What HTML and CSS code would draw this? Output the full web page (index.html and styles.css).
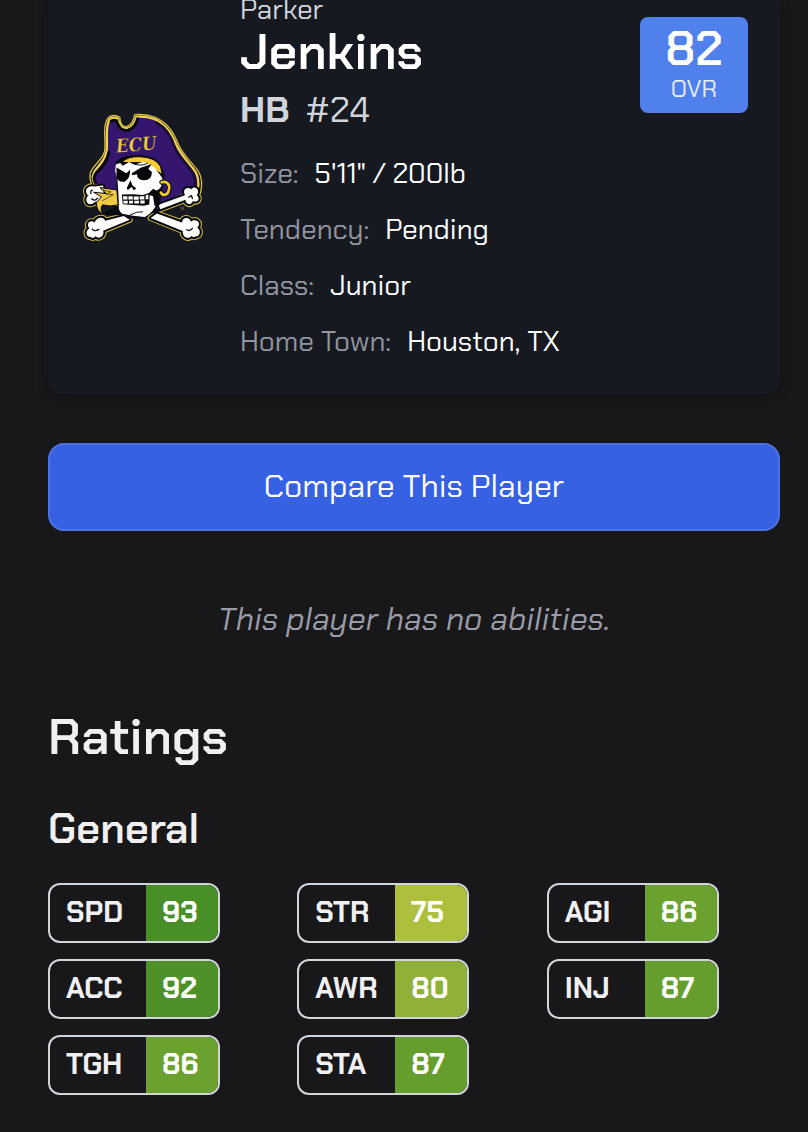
FILE: index.html
```html
<!DOCTYPE html>
<html lang="en">
<head>
<meta charset="utf-8">
<meta name="viewport" content="width=device-width, initial-scale=1">
<title>Parker Jenkins</title>
<link rel="stylesheet" href="styles.css">
</head>
<body>
<main class="page">
  <section class="card">
    <svg class="logo" viewBox="30 22 362 394" role="img" aria-label="ECU Pirates">
      <defs>
        <path id="bones" d="M150 337L94 351C90 338 68 338 62 356C48 346 35 360 46 374C32 382 37 401 50 400C60 407 64 398 64 398C76 408 92 398 88 381L168 348ZM250 329L325 356C328 338 350 340 352 354C368 342 386 357 372 372C386 382 378 400 366 398C360 405 355 396 355 396C344 410 326 400 328 382L231 343ZM255 303L335 274C325 256 342 246 353 256C366 242 382 260 370 274C382 284 375 297 358 292C353 306 336 302 336 288L260 316ZM88 245L62 248C46 243 31 254 38 268Q39 274 44 274C31 284 38 302 49 301Q59 301 64 294L90 290Z"/>
      </defs>
      <g stroke-linejoin="round" stroke-linecap="round">
        <use href="#bones" fill="#d6bd48" stroke="#d6bd48" stroke-width="18"/>
        <path d="M104 39Q119 28 138 39Q139 68 157 67Q177 63 183 31Q217 28 245 39C286 58 302 88 314 119C326 152 356 174 375 202Q390 226 382 266L371 276L258 313L120 303L70 263Q43 237 49 207C56 184 83 171 92 143C98 112 83 65 104 39Z" fill="#080a0f" stroke="#d6bd48" stroke-width="4"/>
        <path d="M108 44Q121 37 132 43Q139 75 160 72Q181 67 188 37Q219 35 242 44C280 62 297 91 308 121C321 154 350 178 367 204Q378 226 374 252L253 306L130 285L71 249Q50 228 59 208C66 190 88 178 97 147C104 115 91 67 108 44Z" fill="#35166f" stroke="#efd34f" stroke-width="7"/>
        <path d="M112 51Q120 46 128 49Q139 84 163 78Q185 71 192 43M66 238Q54 221 69 204C88 188 101 169 105 145" fill="none" stroke="#080a0f" stroke-width="9"/>
        <path d="M248 54C279 71 294 97 303 128C316 161 344 182 360 211Q368 231 366 245" fill="none" stroke="#180e36" stroke-width="8"/>
        <path d="M80 331L130 308L180 320L240 316L330 296L250 326L180 340L140 335Z" fill="#080a0f"/>
        <use href="#bones" fill="#080a0f" stroke="#080a0f" stroke-width="12"/>
        <use href="#bones" fill="#fff"/>
        <path d="M55 376Q62 385 75 377M340 378Q349 384 357 374M346 280L354 275L357 284M53 285Q64 293 71 283M55 259Q48 260 51 269" fill="none" stroke="#15151d" stroke-width="4"/>
        <path d="M130 176Q151 158 190 158Q245 158 257 186L268 214L254 300Q235 331 192 342Q148 337 137 311Z" fill="#080a0f" stroke="#080a0f" stroke-width="10"/>
        <path d="M145 174Q161 156 200 158Q246 160 261 187L266 212L246 198Q231 179 203 176Z" fill="#f5cc38" stroke="#080a0f" stroke-width="3"/>
        <path d="M126 181L139 177L147 185L166 174L182 182L207 174Q233 178 248 197L266 222Q270 250 249 260L239 255L230 266L244 268L250 300Q238 327 213 340L178 336L145 330Q133 320 135 306L134 272L131 228L124 201Z" fill="#fff"/>
        <path d="M128 190L158 208L169 197Q171 221 153 233Q132 236 128 220ZM174 208L201 191L234 180L224 195L235 204Q234 231 209 229Q190 228 190 211L176 214ZM170 229L176 244L188 254L180 259L174 249L162 258L159 253Z" fill="#08080c"/>
        <path d="M144 272L175 271L208 273L226 267L237 256L257 266L255 302L243 307L238 276L228 274L227 302L210 306L147 301Z" fill="#08080c"/>
        <path d="M148 277h13v10h-13zM164 277h13v10h-13zM180 278h15v10h-15zM198 277h14v10h-14zM216 274l8-2v14h-8zM149 291h13v8h-13zM166 291h12v8h-12zM182 291h14v8h-14zM200 290h13v9h-13z" fill="#fff"/>
        <path d="M185 181Q208 187 222 177M170 333Q190 322 207 324" fill="none" stroke="#111119" stroke-width="3"/>
        <path d="M264 235C279 230 291 242 286 257C284 275 267 277 262 266" fill="none" stroke="#080a0f" stroke-width="14"/>
        <path d="M264 235C279 230 291 242 286 257C284 275 267 277 262 266" fill="none" stroke="#efc936" stroke-width="8"/>
        <path d="M60 265L97 269L78 251L129 258L133 303Q108 310 86 303Q76 316 88 332Q67 321 67 296L82 280Z" fill="#f1cc42" stroke="#080a0f" stroke-width="3"/>
        <path d="M86 258L112 264L96 271L119 272L86 290" fill="none" stroke="#65501d" stroke-width="3"/>
      </g>
      <text class="logo-text" x="128" y="146" transform="rotate(-5 128 146)">ECU</text>
      <text class="logo-mark" x="319" y="319">TM</text>
    </svg>
    <div class="details">
      <header class="player-heading">
        <div class="identity">
          <p class="first-name">Parker</p>
          <h1 class="last-name">Jenkins</h1>
          <p class="position"><strong>HB</strong><span>#24</span></p>
        </div>
        <div class="overall"><strong>82</strong><span>OVR</span></div>
      </header>
      <dl class="facts">
        <div class="fact"><dt>Size:</dt><dd>5'11" / 200lb</dd></div>
        <div class="fact"><dt>Tendency:</dt><dd>Pending</dd></div>
        <div class="fact"><dt>Class:</dt><dd>Junior</dd></div>
        <div class="fact"><dt>Home Town:</dt><dd>Houston, TX</dd></div>
      </dl>
    </div>
  </section>
  <button class="compare" type="button">Compare This Player</button>
  <p class="empty">This player has no abilities.</p>
  <h2 class="section-title">Ratings</h2>
  <h3 class="group-title">General</h3>
  <dl class="ratings">
    <div class="rating"><dt>SPD</dt><dd class="r93">93</dd></div>
    <div class="rating"><dt>STR</dt><dd class="r75">75</dd></div>
    <div class="rating"><dt>AGI</dt><dd class="r86">86</dd></div>
    <div class="rating"><dt>ACC</dt><dd class="r92">92</dd></div>
    <div class="rating"><dt>AWR</dt><dd class="r80">80</dd></div>
    <div class="rating"><dt>INJ</dt><dd class="r87">87</dd></div>
    <div class="rating"><dt>TGH</dt><dd class="r86">86</dd></div>
    <div class="rating"><dt>STA</dt><dd class="r87">87</dd></div>
  </dl>
</main>
</body>
</html>
```
FILE: styles.css
```css
* { box-sizing: border-box; }
body {
  margin: 0;
  background: #18181a;
  color: #f0f0f2;
  font-family: "Chakra Petch", Inter, Roboto, sans-serif;
}
h1, h2, h3, p, dl, dd { margin: 0; }
.page { padding: 0 28px 36px 48px; }
.card {
  display: flex;
  align-items: center;
  gap: 36px;
  padding: 0 32px 24px 36px;
  border-radius: 0 0 12px 12px;
  background: #161920;
  box-shadow: 0 4px 8px #131315;
}
.logo { flex: none; width: 120px; height: 132px; margin-bottom: 16px; overflow: visible; }
.logo-text { font: italic bold 56px "DejaVu Serif Condensed", "DejaVu Serif", serif; font-stretch: normal; fill: #efce46; stroke: #201138; stroke-width: 1px; }
.logo-mark { font: 8px "Liberation Sans", sans-serif; fill: #b29c45; }
.details { flex: 1; min-width: 0; }
.player-heading { display: flex; justify-content: space-between; align-items: flex-start; }
.first-name { font-size: 28px; line-height: 20px; color: #d1d5db; }
.last-name { margin-top: 4px; font-size: 50px; line-height: 56px; font-weight: 600; color: #fff; }
.position { display: flex; gap: 16px; margin-top: 8px; font-size: 36px; line-height: 44px; color: #d1d5db; }
.position strong { font-weight: 700; }
.overall {
  display: flex;
  flex-direction: column;
  align-items: center;
  width: 108px;
  height: 96px;
  margin-top: 17px;
  padding-top: 8px;
  border-radius: 8px;
  background: #4f80ec;
  color: #fff;
}
.overall strong { font-size: 48px; line-height: 48px; font-weight: 600; }
.overall span { font-size: 24px; line-height: 32px; color: #e8eefc; }
.facts { margin-top: 14px; }
.fact { display: flex; gap: 16px; font-size: 28px; line-height: 56px; }
.fact dt { color: #9195a1; }
.fact dd { color: #fff; }
.compare {
  display: block;
  width: 100%;
  height: 88px;
  margin-top: 49px;
  padding: 0 0 2px;
  border: 2px solid #4d72e3;
  border-radius: 16px;
  background: #3661e2;
  color: #fff;
  font: inherit;
  font-size: 32px;
}
.empty { margin-top: 64px; font-size: 32px; line-height: 48px; font-style: italic; text-align: center; color: #9a9ca8; }
.section-title { margin-top: 66px; font-size: 50px; line-height: 56px; font-weight: 600; }
.group-title { margin-top: 40px; font-size: 42px; line-height: 48px; font-weight: 600; }
.ratings { display: grid; grid-template-columns: repeat(3, 1fr); gap: 16px; margin-top: 30px; }
.rating {
  display: flex;
  width: 172px;
  height: 60px;
  overflow: hidden;
  border: 2px solid #d1d5d9;
  border-radius: 12px;
  font-size: 29px;
  line-height: 54px;
  font-weight: 700;
}
.rating dt { flex: 1; padding-left: 16px; }
.rating dd { width: 72px; padding-left: 16px; color: #fff; }
.r93 { background: #498f28; }
.r92 { background: #4e9128; }
.r87 { background: #659e2d; }
.r86 { background: #6ba12e; }
.r80 { background: #8fb137; }
.r75 { background: #adbf3d; }
```
